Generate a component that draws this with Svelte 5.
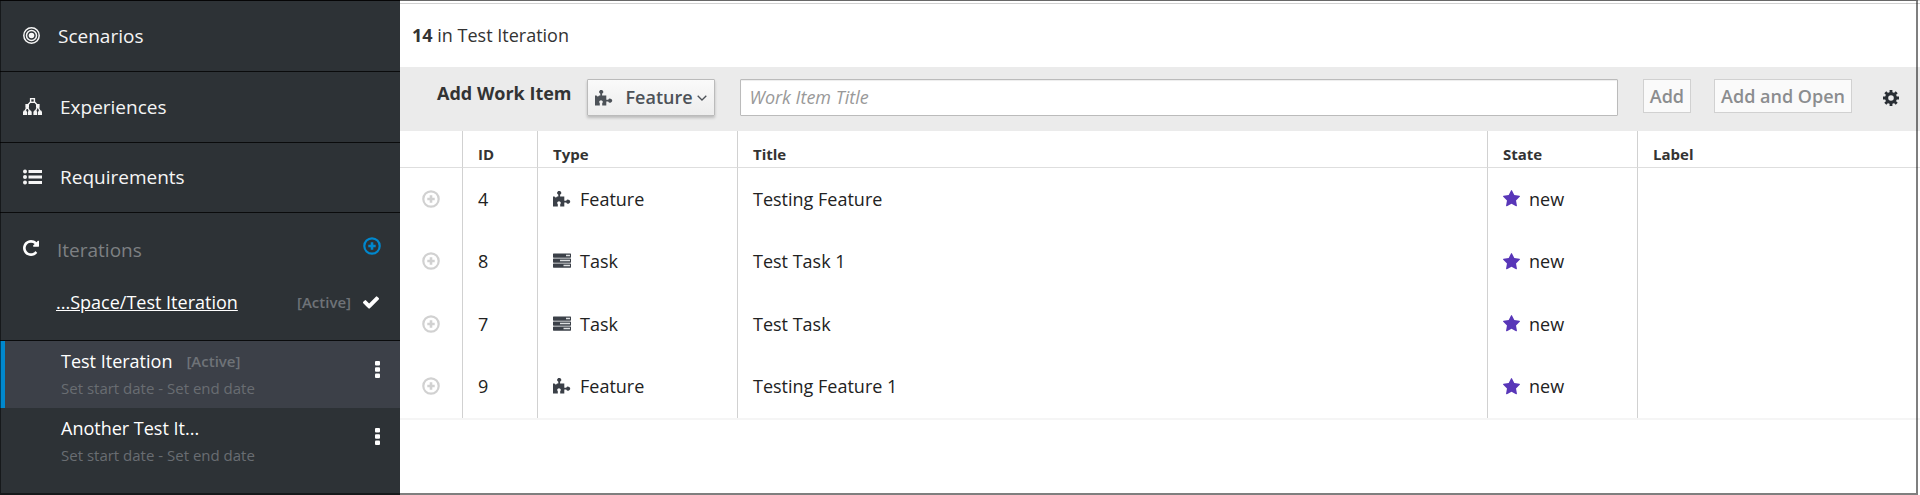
<script>
  const navItems = [
    { label: 'Scenarios', icon: 'target' },
    { label: 'Experiences', icon: 'topology' },
    { label: 'Requirements', icon: 'list' }
  ];

  const iterations = [
    { name: 'Test Iteration', active: true, selected: true },
    { name: 'Another Test It...', active: false, selected: false }
  ];

  const workItems = [
    { id: 4, type: 'Feature', title: 'Testing Feature', state: 'new' },
    { id: 8, type: 'Task', title: 'Test Task 1', state: 'new' },
    { id: 7, type: 'Task', title: 'Test Task', state: 'new' },
    { id: 9, type: 'Feature', title: 'Testing Feature 1', state: 'new' }
  ];

  let newType = $state('Feature');
  let newTitle = $state('');
</script>

{#snippet plusCircle()}
  <svg width="18" height="18" viewBox="0 0 18 18" aria-hidden="true">
    <circle cx="9" cy="9" r="7.7" fill="none" stroke="currentColor" stroke-width="2.2" />
    <path d="M9 5.3v7.4M5.3 9h7.4" stroke="currentColor" stroke-width="2.6" fill="none" />
  </svg>
{/snippet}

{#snippet puzzle()}
  <svg width="18" height="16" viewBox="0 0 18 16" aria-hidden="true">
    <path fill="currentColor" d="M0 5.6h1.6c.3 1.2 2 1.2 2.4 0h1.3V3.7a2 2 0 1 1 1.8 0V5.6H11.3V9.8h1.9a2 2 0 1 1 0 1.7h-1.9V15.5H7.2V13.2a1.7 1.7 0 1 0-2.4 0V15.5H0z" />
  </svg>
{/snippet}

{#snippet tasks()}
  <svg width="18" height="16" viewBox="0 0 18 16" aria-hidden="true">
    <g fill="currentColor">
      <rect x="0" y="0.5" width="18" height="4.2" rx="0.6" />
      <rect x="0" y="5.5" width="18" height="4.2" rx="0.6" />
      <rect x="0" y="10.5" width="18" height="4.2" rx="0.6" />
    </g>
    <path d="M13 2.6h4M7 7.6h10M10.5 12.6H17" stroke="#dcdee0" stroke-width="1.5" />
  </svg>
{/snippet}

{#snippet kebab()}
  <svg width="5" height="17" viewBox="0 0 5 17" aria-hidden="true">
    <g fill="currentColor">
      <rect width="5" height="4.5" rx="1" />
      <rect y="6.2" width="5" height="4.5" rx="1" />
      <rect y="12.4" width="5" height="4.5" rx="1" />
    </g>
  </svg>
{/snippet}

<div class="page">
  <aside>
    <nav>
      {#each navItems as item}
        <a class="nav-row" href="#{item.icon}">
          {#if item.icon === 'target'}
            <svg width="17" height="17" viewBox="0 0 17 17" aria-hidden="true">
              <g fill="none" stroke="currentColor">
                <circle cx="8.5" cy="8.5" r="7.7" stroke-width="1.5" />
                <circle cx="8.5" cy="8.5" r="5" stroke-width="1.5" />
              </g>
              <circle cx="8.5" cy="8.5" r="2.8" fill="currentColor" />
            </svg>
          {:else if item.icon === 'topology'}
            <svg width="19" height="17" viewBox="0 0 19 17" aria-hidden="true">
              <g fill="none" stroke="currentColor" stroke-width="1.4">
                <rect x="7.6" y="0.7" width="3.8" height="3.6" />
                <path d="M7.8 3.6 4.2 7.5M11.2 3.6l3.6 3.9M4.2 8.5 2 13M4.2 8.5 6.500 13M14.8 8.5 12.5 13M14.8 8.5 17 13" />
              </g>
              <g fill="currentColor">
                <path d="M2.400 6h3.600v3.800h-3.600zM13 6h3.600v3.800H13z" />
                <path d="M0 17v-3l.8-1.500h2.400l.9 1.500v3zM4.900 17v-3l.8-1.500h2.200l.8 1.500v3zM10.400 17v-3l.8-1.500h2.200l.8 1.500v3zM15 17v-3l.8-1.500h2.400l.8 1.500v3z" />
              </g>
            </svg>
          {:else}
            <svg width="19" height="16" viewBox="0 0 19 16" aria-hidden="true">
              <g fill="currentColor">
                <circle cx="2" cy="2.5" r="2" /><circle cx="2" cy="8" r="2" /><circle cx="2" cy="13.5" r="2" />
                <path d="M5.5 1H19v3H5.500zM5.500 6.500H19v3H5.500zM5.500 12H19v3H5.500z" />
              </g>
            </svg>
          {/if}
          <span>{item.label}</span>
        </a>
      {/each}
    </nav>

    <section class="iterations">
      <div class="iter-head">
        <svg width="16" height="16" viewBox="128 128 1536 1536" aria-hidden="true">
          <path fill="currentColor" d="M1664 256v448q0 26-19 45t-45 19h-448q-42 0-59-40-17-39 14-69l138-138q-148-137-349-137-104 0-198.500 40.500t-163.500 109.500-109.500 163.500-40.500 198.500 40.500 198.500 109.500 163.500 163.500 109.500 198.500 40.500q119 0 225-52t179-147q7-10 23-12 15 0 25 9l137 138q9 8 9.500 20.500t-7.500 22.500q-109 132-264 204.500t-327 72.500q-156 0-298-61t-245-164-164-245-61-298 61-298 164-245 245-164 298-61q147 0 284.500 55.500t244.500 156.500l130-129q29-31 70-14 39 17 39 59z" />
        </svg>
        <h2>Iterations</h2>
        <button class="plain blue" aria-label="Add iteration">{@render plusCircle()}</button>
      </div>
      <div class="current">
        <a href="#current">...Space/Test Iteration</a>
        <span class="tag">[Active]</span>
        <svg width="16" height="13" viewBox="121 334 1550 1188" aria-hidden="true">
          <path fill="currentColor" d="M1671 566q0 40-28 68l-724 724-136 136q-28 28-68 28t-68-28l-136-136-362-362q-28-28-28-68t28-68l136-136q28-28 68-28t68 28l294 295 656-657q28-28 68-28t68 28l136 136q28 28 28 68z" />
        </svg>
      </div>
    </section>

    <ul>
      {#each iterations as it}
        <li class:selected={it.selected}>
          <div class="iter-text">
            <div class="iter-name">
              <span>{it.name}</span>
              {#if it.active}<span class="tag">[Active]</span>{/if}
            </div>
            <div class="dates">Set start date - Set end date</div>
          </div>
          <button class="plain" aria-label="Iteration actions">{@render kebab()}</button>
        </li>
      {/each}
    </ul>
  </aside>

  <main>
    <header><strong>14</strong> in Test Iteration</header>

    <form class="toolbar" onsubmit={(e) => e.preventDefault()}>
      <label class="caption" for="type">Add Work Item</label>
      <div class="picker">
        <select id="type" bind:value={newType}>
          <option>Feature</option>
          <option>Task</option>
        </select>
        <span class="lead">{#if newType === 'Task'}{@render tasks()}{:else}{@render puzzle()}{/if}</span>
        <svg class="chevron" width="10" height="6" viewBox="0 0 10 6" aria-hidden="true">
          <path d="M.7.7 5 5 9.3.7" fill="none" stroke="currentColor" stroke-width="1.3" />
        </svg>
      </div>
      <input type="text" aria-label="Work Item Title" placeholder="Work Item Title" bind:value={newTitle} />
      <button class="btn add" disabled>Add</button>
      <button class="btn open" disabled>Add and Open</button>
      <button class="plain gear" type="button" aria-label="Settings">
        <svg width="16" height="16" viewBox="0 0 16 16" aria-hidden="true">
          <circle cx="8" cy="8" r="4.4" fill="none" stroke="currentColor" stroke-width="3.2" />
          <path d="M8 0v3M8 13v3M0 8h3M13 8h3M2.3 2.3l2 2M11.700 11.700l2 2M13.700 2.300l-2 2M4.300 11.700l-2 2" stroke="currentColor" stroke-width="2.8" />
        </svg>
      </button>
    </form>

    <table>
      <thead>
        <tr>
          <th class="c-add" aria-label="Add child"></th>
          <th class="c-id">ID</th>
          <th class="c-type">Type</th>
          <th>Title</th>
          <th class="c-state">State</th>
          <th class="c-label">Label</th>
        </tr>
      </thead>
      <tbody>
        {#each workItems as w}
          <tr>
            <td class="c-add"><button class="plain pale" aria-label="Add child item">{@render plusCircle()}</button></td>
            <td>{w.id}</td>
            <td>
              <div class="cell">
                <span class="type-icon">{#if w.type === 'Task'}{@render tasks()}{:else}{@render puzzle()}{/if}</span>
                {w.type}
              </div>
            </td>
            <td>{w.title}</td>
            <td>
              <div class="cell">
                <svg class="star" width="17" height="17" viewBox="64 60 1664 1600" aria-hidden="true">
                  <path fill="currentColor" d="M1728 647q0 22-26 48l-363 354 86 500q1 7 1 20 0 21-10.500 35.500t-30.500 14.500q-19 0-40-12l-449-236-449 236q-22 12-40 12-21 0-31.500-14.500t-10.500-35.500q0-6 2-20l86-500-364-354q-25-27-25-48 0-37 56-46l502-73 225-455q19-41 49-41t49 41l225 455 502 73q56 9 56 46z" />
                </svg>
                {w.state}
              </div>
            </td>
            <td></td>
          </tr>
        {/each}
      </tbody>
    </table>
  </main>
</div>

<style>
  :global(body) {
    margin: 0;
    background: #fff;
  }
  .page,
  .page * {
    box-sizing: border-box;
  }
  .page {
    position: relative;
    display: flex;
    min-height: 100vh;
    font: 18px/24px 'Open Sans', 'Noto Sans', sans-serif;
    color: #333;
  }
  .page::after {
    content: '';
    position: absolute;
    inset: 0 2px 0 0;
    border: solid rgba(0, 0, 0, 0.5);
    border-width: 1px 2px 2px 1px;
    pointer-events: none;
  }
  svg {
    display: block;
    flex: none;
  }
  button,
  select,
  input {
    font: inherit;
    margin: 0;
  }
  .plain {
    display: block;
    padding: 0;
    border: 0;
    background: none;
    color: inherit;
  }
  aside {
    flex: none;
    width: 400px;
    background: #2d3236;
    color: #fff;
  }
  .nav-row {
    display: flex;
    align-items: center;
    gap: 18px;
    height: 71px;
    padding: 0 0 1px 23px;
    border-top: 1px solid #0a0b0c;
    color: #f5f5f5;
    font-size: 19px;
    text-decoration: none;
  }
  .nav-row:last-child {
    height: 70px;
  }
  .iterations {
    padding: 23px 19px 26px 23px;
    border-top: 1px solid #0a0b0c;
    border-bottom: 1px solid #0a0b0c;
  }
  .iter-head {
    display: flex;
    align-items: center;
    height: 24px;
    gap: 18px;
  }
  h2 {
    flex: 1;
    margin: 0;
    padding-top: 3px;
    font-size: 19px;
    font-weight: 400;
    color: #7d8083;
  }
  .blue {
    align-self: flex-start;
    padding-top: 1px;
    color: #0088ce;
  }
  .current {
    display: flex;
    align-items: center;
    gap: 12px;
    height: 24px;
    margin: 30px 2px 0 33px;
  }
  .current a {
    flex: 1;
    color: #fff;
    text-decoration: underline;
  }
  .tag {
    font-size: 15px;
    font-weight: 600;
    color: #6f7378;
  }
  ul {
    margin: 0;
    padding: 0;
    list-style: none;
  }
  li {
    display: flex;
    justify-content: space-between;
    padding: 8px 20px 8px 56px;
    border-left: 5px solid transparent;
  }
  li.selected {
    background: #3c4048;
    border-left-color: #0088ce;
  }
  .iter-name {
    display: flex;
    gap: 14px;
  }
  .dates {
    padding: 4px 0 1px;
    font-size: 15px;
    line-height: 22px;
    color: #696d72;
  }
  li .plain {
    align-self: flex-start;
    padding-top: 12px;
  }
  main {
    flex: 1;
    min-width: 0;
    border-top: 4px double #d1d1d1;
  }
  header {
    padding: 19px 12px 20px;
    line-height: 24px;
  }
  strong {
    font-weight: 700;
  }
  .toolbar {
    display: flex;
    align-items: flex-start;
    height: 64px;
    padding: 12px 21px 0 37px;
    background: #ebebeb;
  }
  .caption {
    margin-right: 15px;
    padding-top: 2px;
    font-weight: 700;
  }
  .picker {
    display: grid;
    align-items: center;
    width: 128px;
    margin-right: 25px;
    color: #4d5258;
  }
  .picker > * {
    grid-area: 1 / 1;
  }
  select {
    appearance: none;
    height: 37px;
    padding: 0 0 1px 38px;
    border: 1px solid #bbb;
    border-radius: 1px;
    background: linear-gradient(#fafafa, #ededed);
    box-shadow: 0 2px 3px rgba(3, 3, 3, 0.2);
    color: inherit;
    font-weight: 600;
  }
  .lead {
    margin-left: 8px;
    pointer-events: none;
  }
  .chevron {
    justify-self: end;
    margin-right: 8px;
    pointer-events: none;
  }
  input {
    flex: 1;
    min-width: 0;
    height: 37px;
    padding: 0 9px 1px;
    border: 1px solid #bbb;
    border-radius: 1px;
    box-shadow: inset 0 1px 1px rgba(3, 3, 3, 0.075);
  }
  input::placeholder {
    color: #999;
    font-style: italic;
    opacity: 1;
  }
  .btn {
    height: 34px;
    padding: 0 6px;
    border: 1px solid #d1d1d1;
    background: #fafafa;
    color: #8b8d8f;
    font-weight: 600;
  }
  .add {
    margin-left: 25px;
  }
  .open {
    margin-left: 23px;
  }
  .gear {
    margin: 11px 0 0 31px;
    color: #292e34;
  }
  table {
    width: 100%;
    table-layout: fixed;
    border-collapse: separate;
    border-spacing: 0;
    border-bottom: 2px solid #f5f5f5;
  }
  th,
  td {
    padding: 0 15px;
    border-right: 1px solid #d1d1d1;
    text-align: left;
  }
  th:last-child,
  td:last-child {
    border-right: 0;
  }
  th {
    height: 37px;
    padding-top: 10px;
    border-bottom: 1px solid #dedede;
    font-size: 15px;
    font-weight: 700;
  }
  td {
    height: 62px;
    padding-bottom: 2px;
    color: #222;
  }
  tr:nth-child(odd) td {
    height: 63px;
  }
  .c-add {
    width: 63px;
    padding-left: 22px;
  }
  .c-id {
    width: 75px;
  }
  .c-type {
    width: 200px;
  }
  .c-state {
    width: 150px;
  }
  .c-label {
    width: 282px;
  }
  .pale {
    color: #d1d1d1;
  }
  .cell {
    display: flex;
    align-items: center;
    gap: 9px;
  }
  .type-icon {
    color: #3b4048;
  }
  .star {
    color: #5836b8;
  }
</style>
